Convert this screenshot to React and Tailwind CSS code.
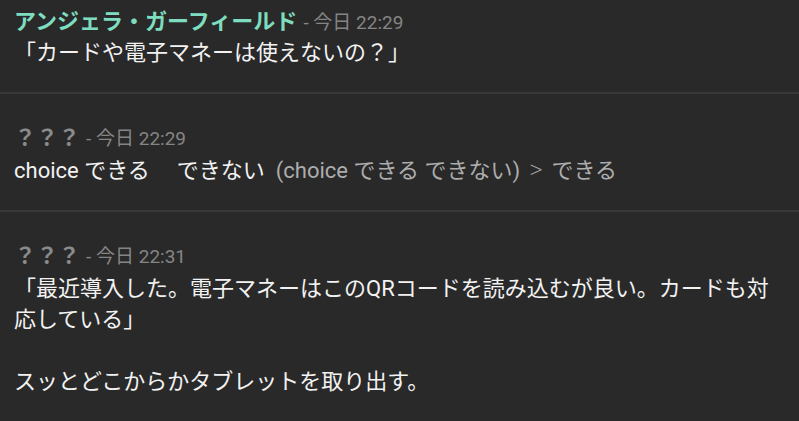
const FONT = { fontFamily: 'Roboto, "Noto Sans CJK JP", sans-serif' };

const messages = [
  {
    id: 1,
    name: "アンジェラ・ガーフィールド",
    nameColor: "text-[#7edcbf]",
    time: "今日 22:29",
    lines: [<span key="a">「カードや電子マネーは使えないの？」</span>],
  },
  {
    id: 2,
    name: "？？？",
    nameColor: "text-[#8a8a8a]",
    time: "今日 22:29",
    lines: [
      <span key="b">
        choice できる　<span className="ml-[5px]">できない</span>
        <span className="ml-[11px] text-[#adadad]">
          (choice できる できない)
          <span className="px-[9px] text-[26px] leading-none font-extralight">&gt;</span>
          できる
        </span>
      </span>,
    ],
  },
  {
    id: 3,
    name: "？？？",
    nameColor: "text-[#8a8a8a]",
    time: "今日 22:31",
    lines: [
      <span key="c">
        「最近導入した。電子マネーはこのQRコードを読み込むが良い。カードも対応している」
      </span>,
      <br key="d" />,
      <br key="e" />,
      <span key="f">スッとどこからかタブレットを取り出す。</span>,
    ],
  },
];

const Message = ({ msg, first, last }) => (
  <div
    className={`pl-[14px] pr-[12px] ${first ? "pt-[7px]" : "pt-[29px]"} ${
      last ? "pb-4" : "pb-[24px] border-b-2 border-[#383838]"
    }`}
  >
    <div className="flex items-baseline gap-[6px] h-[29px] whitespace-nowrap">
      <span className={`text-[22px] leading-[29px] font-bold ${msg.nameColor}`}>{msg.name}</span>
      <span className="text-[19px] leading-[29px] text-[#858585]">- {msg.time}</span>
    </div>
    <p
      className={`${first ? "mt-[1px]" : "mt-[3px]"} text-[22px] leading-[31px] text-[#f2f2f2]`}
    >
      {msg.lines}
    </p>
  </div>
);

export default function App() {
  return (
    <div className="w-[799px] h-[421px] overflow-hidden bg-[#292929]" style={FONT}>
      {messages.map((m, i) => (
        <Message key={m.id} msg={m} first={i === 0} last={i === messages.length - 1} />
      ))}
    </div>
  );
}
